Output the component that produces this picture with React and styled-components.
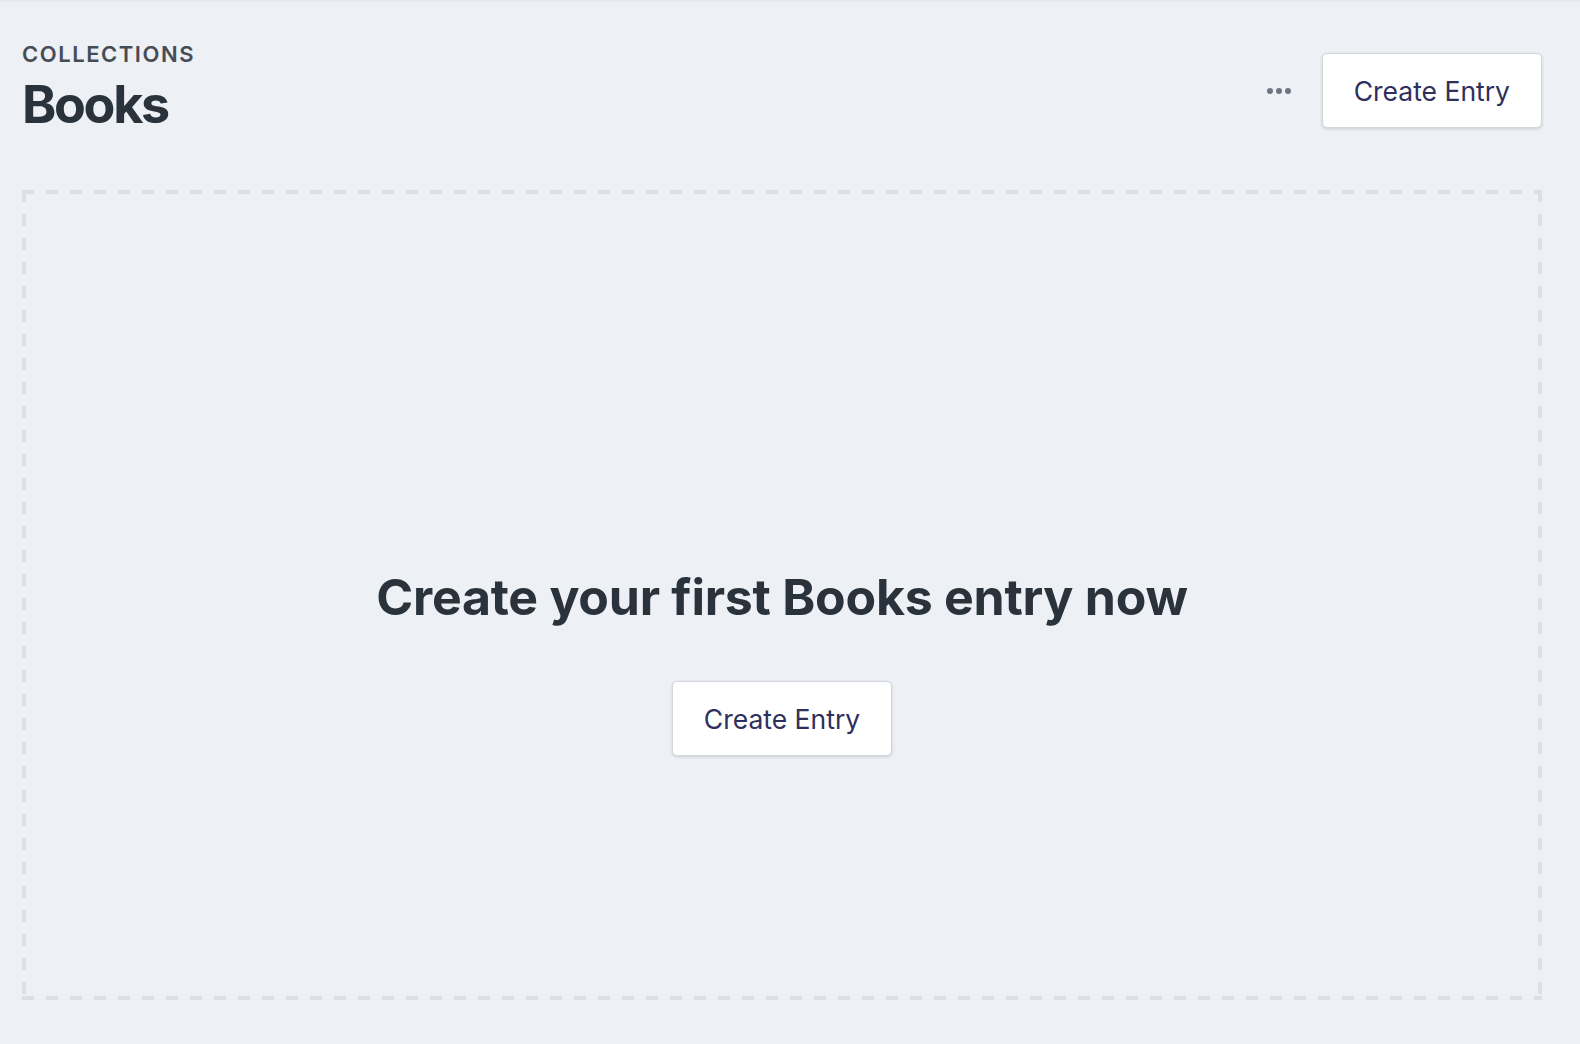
import styled, { createGlobalStyle } from "styled-components";

const GlobalStyle = createGlobalStyle`
  * { box-sizing: border-box; }
  html, body {
    margin: 0;
    padding: 0;
    background: #edf0f4;
    font-family: Inter, "Noto Sans", "Liberation Sans", sans-serif;
  }
  body { border-top: 2px solid #e6e9ee; }
`;

const dash = "#dcdfe4";

const Page = styled.main`
  min-height: calc(100vh - 2px);
  display: flex;
  flex-direction: column;
  padding: 39px 38px 44px 22px;
`;

const Header = styled.header`
  display: flex;
  justify-content: space-between;
  align-items: flex-start;
`;

const TitleBlock = styled.div`
  display: flex;
  flex-direction: column;
`;

const Eyebrow = styled.div`
  font-size: 22px;
  line-height: 26px;
  font-weight: 600;
  letter-spacing: 0.07em;
  color: #464c54;
  text-transform: uppercase;
`;

const Title = styled.h1`
  margin: 7px 0 0;
  font-size: 52px;
  line-height: 62px;
  font-weight: 700;
  letter-spacing: -0.045em;
  color: #2a323b;
`;

const Actions = styled.div`
  display: flex;
  align-items: center;
  gap: 31px;
  margin-top: 12px;
`;

const MoreButton = styled.button`
  display: flex;
  gap: 3px;
  padding: 0;
  border: 0;
  background: none;
  cursor: pointer;
  span {
    width: 6px;
    height: 6px;
    border-radius: 50%;
    background: #6b7684;
  }
`;

const Button = styled.button`
  height: 75px;
  padding: 1px 31px 0;
  border: 1px solid #d3d6dd;
  border-radius: 5px;
  background: #fff;
  box-shadow: 0 1px 3px rgba(40, 50, 70, 0.18);
  font-family: inherit;
  font-size: 26.5px;
  font-weight: 400;
  color: #2f2f5e;
  cursor: pointer;
  white-space: nowrap;
`;

const EmptyBox = styled.section`
  flex: 1;
  margin-top: 54px;
  background:
    repeating-linear-gradient(90deg, ${dash} 0 12px, transparent 12px 24px) left top / 100% 4px no-repeat,
    repeating-linear-gradient(90deg, ${dash} 0 12px, transparent 12px 24px) left bottom / 100% 4px no-repeat,
    repeating-linear-gradient(180deg, ${dash} 0 12px, transparent 12px 24px) left top / 4px 100% no-repeat,
    repeating-linear-gradient(180deg, ${dash} 0 12px, transparent 12px 24px) right top / 4px 100% no-repeat;
  display: flex;
  flex-direction: column;
  align-items: center;
  padding-top: 377px;
`;

const EmptyHeading = styled.h2`
  margin: 0;
  font-size: 50px;
  line-height: 60px;
  font-weight: 700;
  letter-spacing: -0.005em;
  color: #2a323b;
`;

const EmptyAction = styled.div`
  margin-top: 54px;
`;

export default function App() {
  return (
    <>
      <GlobalStyle />
      <Page>
        <Header>
          <TitleBlock>
            <Eyebrow>Collections</Eyebrow>
            <Title>Books</Title>
          </TitleBlock>
          <Actions>
            <MoreButton aria-label="More">
              <span />
              <span />
              <span />
            </MoreButton>
            <Button>Create Entry</Button>
          </Actions>
        </Header>
        <EmptyBox>
          <EmptyHeading>Create your first Books entry now</EmptyHeading>
          <EmptyAction>
            <Button>Create Entry</Button>
          </EmptyAction>
        </EmptyBox>
      </Page>
    </>
  );
}
